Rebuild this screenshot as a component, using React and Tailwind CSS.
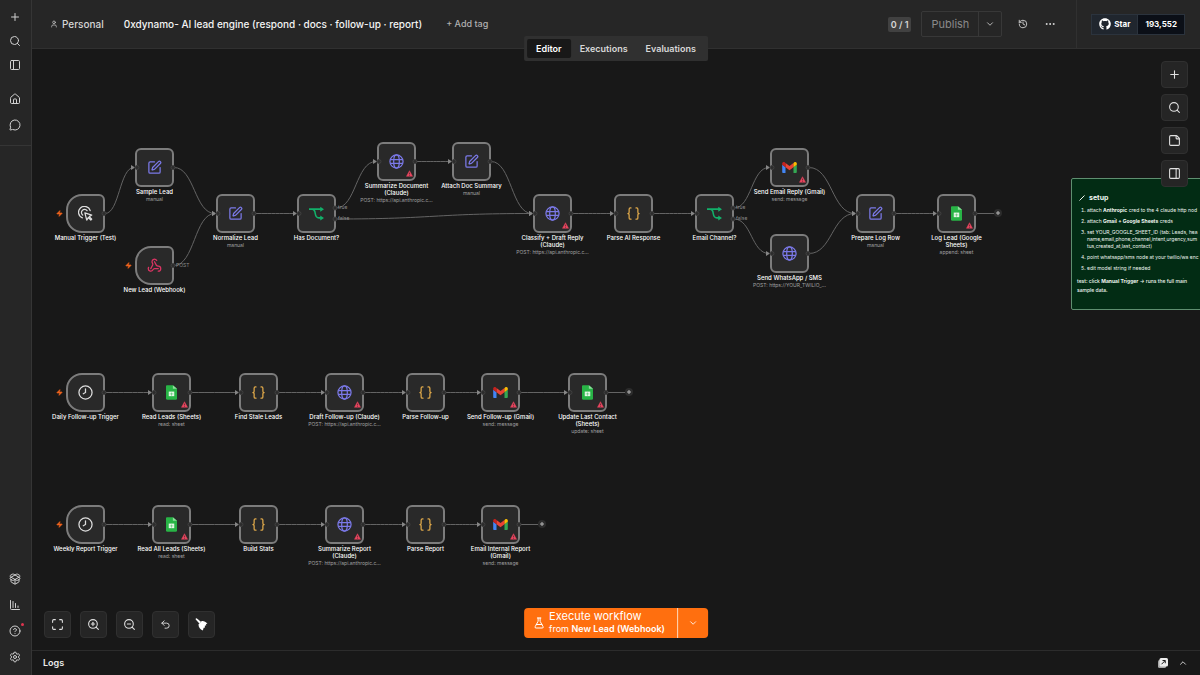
import {
  ChartColumnDecreasing,
  ChevronDown,
  ChevronUp,
  Braces,
  CircleQuestionMark,
  Ellipsis,
  FlaskConical,
  History,
  House,
  Maximize,
  MessageCircle,
  PackageOpen,
  PanelLeft,
  PanelRight,
  Plus,
  Search,
  Settings,
  SquarePen,
  StickyNote,
  Undo2,
  User,
  Webhook,
  Zap,
  ZoomIn,
  ZoomOut,
} from 'lucide-react'
import { FaGithub } from 'react-icons/fa'

const NODE_SIZE = 39

const NODES = [
  { id: 'manual', x: 34, y: 145, icon: 'click', label: ['Manual Trigger (Test)'], trigger: true },
  { id: 'sample', x: 103, y: 99, icon: 'edit', label: ['Sample Lead'], sub: 'manual' },
  { id: 'webhook', x: 103, y: 197, icon: 'webhook', label: ['New Lead (Webhook)'], trigger: true },
  { id: 'normalize', x: 184, y: 145, icon: 'edit', label: ['Normalize Lead'], sub: 'manual' },
  { id: 'hasDoc', x: 265, y: 145, icon: 'branch', label: ['Has Document?'] },
  { id: 'summarize', x: 345, y: 93, icon: 'globe', label: ['Summarize Document', '(Claude)'], sub: 'POST: https://api.anthropic.c...', warn: true },
  { id: 'attach', x: 420, y: 93, icon: 'edit', label: ['Attach Doc Summary'], sub: 'manual' },
  { id: 'classify', x: 501, y: 145, icon: 'globe', label: ['Classify + Draft Reply', '(Claude)'], sub: 'POST: https://api.anthropic.c...', warn: true },
  { id: 'parseAi', x: 582, y: 145, icon: 'code', label: ['Parse AI Response'] },
  { id: 'channel', x: 663, y: 145, icon: 'branch', label: ['Email Channel?'] },
  { id: 'email', x: 738, y: 99, icon: 'gmail', label: ['Send Email Reply (Gmail)'], sub: 'send: message', warn: true },
  { id: 'sms', x: 738, y: 185, icon: 'globe', label: ['Send WhatsApp / SMS'], sub: 'POST: https://YOUR_TWILIO_...' },
  { id: 'prepare', x: 824, y: 145, icon: 'edit', label: ['Prepare Log Row'], sub: 'manual' },
  { id: 'log', x: 905, y: 145, icon: 'sheets', label: ['Log Lead (Google', 'Sheets)'], sub: 'append: sheet', warn: true, end: true },

  { id: 'daily', x: 34, y: 324, icon: 'clock', label: ['Daily Follow-up Trigger'], trigger: true },
  { id: 'readLeads', x: 120, y: 324, icon: 'sheets', label: ['Read Leads (Sheets)'], sub: 'read: sheet', warn: true },
  { id: 'stale', x: 207, y: 324, icon: 'code', label: ['Find Stale Leads'] },
  { id: 'draft', x: 293, y: 324, icon: 'globe', label: ['Draft Follow-up (Claude)'], sub: 'POST: https://api.anthropic.c...', warn: true },
  { id: 'parseFollow', x: 374, y: 324, icon: 'code', label: ['Parse Follow-up'] },
  { id: 'sendFollow', x: 449, y: 324, icon: 'gmail', label: ['Send Follow-up (Gmail)'], sub: 'send: message', warn: true },
  { id: 'update', x: 536, y: 324, icon: 'sheets', label: ['Update Last Contact', '(Sheets)'], sub: 'update: sheet', warn: true, end: true },

  { id: 'weekly', x: 34, y: 456, icon: 'clock', label: ['Weekly Report Trigger'], trigger: true },
  { id: 'readAll', x: 120, y: 456, icon: 'sheets', label: ['Read All Leads (Sheets)'], sub: 'read: sheet', warn: true },
  { id: 'stats', x: 207, y: 456, icon: 'code', label: ['Build Stats'] },
  { id: 'sumReport', x: 293, y: 456, icon: 'globe', label: ['Summarize Report', '(Claude)'], sub: 'POST: https://api.anthropic.c...', warn: true },
  { id: 'parseReport', x: 374, y: 456, icon: 'code', label: ['Parse Report'] },
  { id: 'emailReport', x: 449, y: 456, icon: 'gmail', label: ['Email Internal Report', '(Gmail)'], sub: 'send: message', warn: true, end: true },
]

const EDGES = [
  ['manual', 'sample'],
  ['sample', 'normalize'],
  ['webhook', 'normalize'],
  ['normalize', 'hasDoc'],
  ['hasDoc', 'summarize', 14],
  ['hasDoc', 'classify', 25],
  ['summarize', 'attach'],
  ['attach', 'classify'],
  ['classify', 'parseAi'],
  ['parseAi', 'channel'],
  ['channel', 'email', 14],
  ['channel', 'sms', 25],
  ['email', 'prepare'],
  ['sms', 'prepare'],
  ['prepare', 'log'],
  ['daily', 'readLeads'],
  ['readLeads', 'stale'],
  ['stale', 'draft'],
  ['draft', 'parseFollow'],
  ['parseFollow', 'sendFollow'],
  ['sendFollow', 'update'],
  ['weekly', 'readAll'],
  ['readAll', 'stats'],
  ['stats', 'sumReport'],
  ['sumReport', 'parseReport'],
  ['parseReport', 'emailReport'],
]

const byId = Object.fromEntries(NODES.map((node) => [node.id, node]))

const ClickIcon = () => (
  <svg className="w-[15px] h-[15px] text-[#dedede]" viewBox="0 0 24 24" fill="none" stroke="currentColor" strokeWidth="2" strokeLinecap="round" strokeLinejoin="round">
    <path d="M7 19A9.500 9.500 0 1 1 19.500 7.500" />
    <path d="M7.500 14.500A5 5 0 1 1 14.500 7.500" />
    <path d="M11 11l11 3.500-4 2.500 4 4-1.500 1.500-4-4-2.500 4z" />
  </svg>
)

const GlobeIcon = () => (
  <svg className="w-[15px] h-[15px] text-[#7b79e8]" viewBox="0 0 24 24" fill="none" stroke="currentColor" strokeWidth="2">
    <circle cx="12" cy="12" r="10.500" />
    <ellipse cx="12" cy="12" rx="4.500" ry="10.500" />
    <path d="M2 9h20M2 15h20" />
  </svg>
)

const BranchIcon = () => (
  <svg className="w-[15px] h-[15px] text-[#12b06a]" viewBox="0 0 24 24" fill="none" stroke="currentColor" strokeWidth="2.500">
    <path d="M0 5h20M5 5c4 0 4.500 3 5 7s2 7 6 7h4" />
    <path d="M18 1l6 4-6 4zM18 15l6 4-6 4z" fill="currentColor" stroke="none" />
  </svg>
)

const ClockIcon = () => (
  <svg className="w-[15px] h-[15px] text-[#dedede]" viewBox="0 0 24 24" fill="none" stroke="currentColor" strokeWidth="2" strokeLinecap="round">
    <circle cx="12" cy="12" r="10.500" />
    <path d="M12 6v6l-3.500 2" />
  </svg>
)

const GmailIcon = () => (
  <svg className="w-[15px] h-[11px]" viewBox="0 0 256 193">
    <path fill="#4285f4" d="M58 192V93L27 65 0 50v125c0 10 8 17 17 17z" />
    <path fill="#34a853" d="M198 192h41c9 0 17-8 17-17V50l-31 18-27 25z" />
    <path fill="#ea4335" d="M58 93l-4-38 4-37 70 53 70-53 5 35-5 40-70 53z" />
    <path fill="#fbbc04" d="M198 18v75l58-43V26c0-21-25-34-42-21z" />
    <path fill="#c5221f" d="M0 50l27 20 31 23V18L42 5C25-8 0 5 0 26z" />
  </svg>
)

const SheetsIcon = () => (
  <svg className="w-[11px] h-[15px]" viewBox="0 0 24 32">
    <path fill="#28b446" d="M2 0h13l9 8v21a3 3 0 0 1-3 3H3a3 3 0 0 1-3-3V2a2 2 0 0 1 2-2z" />
    <path fill="#8ede9c" d="M15 0l9 8h-9z" />
    <rect x="6" y="14" width="12" height="10" fill="#e6f7e8" />
    <path d="M8 19h8M12 16v7" stroke="#28b446" strokeWidth="1" />
  </svg>
)

const BroomIcon = () => (
  <svg className="w-[13px] h-[13px] text-white" viewBox="0 0 24 24" fill="currentColor">
    <path d="M1.500 1l1.500-.500 8 6.500-3 3L1 2.500z" />
    <path d="M12.500 5.500c4-.500 7 1 10.500 5l-3 .500 1 2.500-3 1 .500 3-2.500.500-1.500 5C9.500 21 6 16.500 6.500 11.500z" />
  </svg>
)

const WarningIcon = () => (
  <svg className="absolute right-px bottom-0.5 w-[7px] h-[7px]" viewBox="0 0 16 16">
    <path fill="#e8455f" d="M8 1.500L15 14.500H1z" stroke="#e8455f" strokeLinejoin="round" />
    <path d="M8 6v4M8 11.500v1.500" stroke="#3a2228" strokeWidth="1.500" />
  </svg>
)

const NodeIcon = ({ name }) => {
  switch (name) {
    case 'click':
      return <ClickIcon />
    case 'edit':
      return <SquarePen className="w-[15px] h-[15px] text-[#7b79e8]" />
    case 'webhook':
      return <Webhook className="w-[15px] h-[15px] text-[#dc3464]" />
    case 'branch':
      return <BranchIcon />
    case 'globe':
      return <GlobeIcon />
    case 'code':
      return <Braces className="w-[15px] h-[15px] text-[#e0a94a]" />
    case 'gmail':
      return <GmailIcon />
    case 'sheets':
      return <SheetsIcon />
    default:
      return <ClockIcon />
  }
}

const WorkflowNode = ({ node }) => (
  <div
    className="absolute flex flex-col items-center w-[39px]"
    style={{ left: node.x, top: node.y }}
  >
    <div
      className={`relative flex items-center justify-center w-[39px] h-[39px] shrink-0 border-2 border-[#7c7c7c] bg-[#292929] ${
        node.trigger ? 'rounded-r-md rounded-l-2xl' : 'rounded-md'
      }`}
    >
      <NodeIcon name={node.icon} />
      {node.warn && <WarningIcon />}
      {node.trigger && <Zap className="absolute -left-[12px] w-[7px] h-[7px] fill-[#f0641e] text-[#f0641e]" />}
    </div>
    <div className="mt-px text-[6px] leading-[7px] font-medium text-white text-center whitespace-nowrap">
      {node.label.map((line) => (
        <p key={line}>{line}</p>
      ))}
    </div>
    {node.sub && <p className="text-[5px] leading-[8px] text-[#a0a0a0] whitespace-nowrap">{node.sub}</p>}
  </div>
)

const edgePath = ([from, to, offset]) => {
  const x1 = byId[from].x + NODE_SIZE
  const y1 = byId[from].y + (offset ?? NODE_SIZE / 2)
  const x2 = byId[to].x - 1
  const y2 = byId[to].y + NODE_SIZE / 2
  const mid = (x1 + x2) / 2
  return `M${x1} ${y1}C${mid} ${y1} ${mid} ${y2} ${x2} ${y2}`
}

const Edges = () => (
  <svg className="absolute inset-0 w-full h-full" fill="none">
    {EDGES.map((edge) => {
      const target = byId[edge[1]]
      return (
        <g key={edge.join('-')}>
          <path d={edgePath(edge)} stroke="#646464" />
          <path
            d={`M${target.x - 4} ${target.y + 17}l4 2.500-4 2.500z`}
            fill="#868686"
          />
        </g>
      )
    })}
    {NODES.filter((node) => node.end).map((node) => (
      <g key={node.id}>
        <path d={`M${node.x + NODE_SIZE} ${node.y + 19.5}h18`} stroke="#646464" />
        <circle cx={node.x + 61} cy={node.y + 19} r="4" fill="#2c2c2c" />
        <path d={`M${node.x + 59} ${node.y + 19}h4m-2-2v4`} stroke="#b5b5b5" />
      </g>
    ))}
  </svg>
)

// connection dots sit above the node borders
const Handles = () => (
  <svg className="absolute inset-0 w-full h-full pointer-events-none" fill="#2c2c2c" stroke="#404040">
    {NODES.map((node) => (
      <g key={node.id}>
        {!node.trigger && <circle cx={node.x + 2} cy={node.y + 19.5} r="2" />}
        {node.icon === 'branch' ? (
          <>
            <circle cx={node.x + 38} cy={node.y + 14} r="2" />
            <circle cx={node.x + 38} cy={node.y + 25} r="2" />
          </>
        ) : (
          <circle cx={node.x + 38} cy={node.y + 19.5} r="2" />
        )}
      </g>
    ))}
  </svg>
)

const OutputLabels = ({ node }) => (
  <div
    className="absolute flex flex-col gap-[6px] text-[5px] leading-[5px] text-[#8c8c8c]"
    style={{ left: node.x + 41, top: node.y + 11 }}
  >
    <span>true</span>
    <span>false</span>
  </div>
)

const StickyNoteCard = () => (
  <section className="absolute left-[1039px] top-[129px] w-[200px] h-[132px] px-[5px] pt-[14px] rounded-xs border border-[#5f8f70] bg-[#022c14] text-[#eef6f0] whitespace-nowrap">
    <h2 className="flex items-center gap-1 px-0.5 text-[7px] leading-[10px] font-bold">
      <svg className="w-[6px] h-[6px]" viewBox="0 0 12 12" stroke="currentColor" strokeWidth="2">
        <path d="M1 11L11 1" />
      </svg>
      setup
    </h2>
    <ol className="flex flex-col gap-[4px] mt-[4px] pl-[10px] text-[5px] leading-[7px] list-decimal">
      <li>attach <b>Anthropic</b> cred to the 4 claude http nod</li>
      <li>attach <b>Gmail + Google Sheets</b> creds</li>
      <li>
        set YOUR_GOOGLE_SHEET_ID (tab: Leads, hea
        <br />
        name,email,phone,channel,intent,urgency,sum
        <br />
        tus,created_at,last_contact)
      </li>
      <li>point whatsapp/sms node at your twilio/wa enc</li>
      <li>edit model string if needed</li>
    </ol>
    <p className="mt-[5px] text-[5px] leading-[9px] font-medium">
      test: click <b>Manual Trigger</b> → runs the full main
      <br />
      sample data.
    </p>
  </section>
)

const IconButton = ({ label, children }) => (
  <button
    type="button"
    aria-label={label}
    className="flex items-center justify-center w-[27px] h-[27px] rounded border border-[#303030] bg-[#252525] text-[#e0e0e0]"
  >
    {children}
  </button>
)

const SidebarButton = ({ label, children }) => (
  <button type="button" aria-label={label} className="relative flex items-center justify-center w-full h-3 text-[#d0d0d0]">
    {children}
  </button>
)

const Sidebar = () => (
  <nav className="flex flex-col justify-between w-8 shrink-0 border-r border-[#353535] bg-[#262626]">
    <div className="pt-[11px] pr-px pb-[14px] border-b border-[#353535]">
      <div className="flex flex-col gap-3">
        <SidebarButton label="Create"><Plus className="w-3 h-3" /></SidebarButton>
        <SidebarButton label="Search"><Search className="w-3 h-3" /></SidebarButton>
        <SidebarButton label="Toggle sidebar"><PanelLeft className="w-3 h-3" /></SidebarButton>
      </div>
      <div className="flex flex-col gap-[14px] mt-[22px]">
        <SidebarButton label="Home"><House className="w-3 h-3" /></SidebarButton>
        <SidebarButton label="Chat"><MessageCircle className="w-3 h-3" /></SidebarButton>
      </div>
    </div>
    <div className="flex flex-col gap-[14px] pr-px pb-3">
      <SidebarButton label="Templates"><PackageOpen className="w-3 h-3" /></SidebarButton>
      <SidebarButton label="Insights"><ChartColumnDecreasing className="w-3 h-3" /></SidebarButton>
      <SidebarButton label="Help">
        <CircleQuestionMark className="w-3 h-3" />
        <span className="absolute right-[6px] -top-[2px] w-[3px] h-[3px] rounded-full bg-[#e0344f]" />
      </SidebarButton>
      <SidebarButton label="Settings"><Settings className="w-3 h-3" /></SidebarButton>
    </div>
  </nav>
)

const Header = () => (
  <header className="flex items-center h-[49px] shrink-0 border-b border-[#303030] bg-[#262626] whitespace-nowrap">
    <a href="#personal" className="flex items-center gap-1 pl-[18px] text-[10px] font-medium text-[#d6d6d6]">
      <User className="w-2 h-2" />
      Personal
    </a>
    <h1 className="ml-5 text-[10px] font-medium text-[#f4f4f4]">
      0xdynamo- AI lead engine (respond · docs · follow-up · report)
    </h1>
    <button type="button" className="ml-6 text-[9px] font-medium text-[#b0b0b0]">+ Add tag</button>

    <div className="flex items-center ml-auto mr-5">
      <span className="px-[3px] rounded-xs bg-[#414141] text-[9px] leading-[15px] font-semibold text-[#d6d6d6]">0 / 1</span>
      <div className="flex items-center ml-[10px] h-[26px] rounded-xs border border-[#383838]">
        <button type="button" className="h-full px-[9px] border-r border-[#383838] text-[11px] font-normal text-[#8a8a8a]">Publish</button>
        <button type="button" aria-label="Publish options" className="flex items-center justify-center w-[22px] h-full text-[#d0d0d0]">
          <ChevronDown className="w-2.5 h-2.5" />
        </button>
      </div>
      <button type="button" aria-label="History" className="ml-4 text-[#e0e0e0]"><History className="w-2.5 h-2.5" /></button>
      <button type="button" aria-label="More" className="ml-4 text-[#e0e0e0]"><Ellipsis className="w-3 h-3" /></button>
    </div>

    <div className="flex items-center h-full pl-[14px] pr-[15px] border-l border-[#303030]">
      <a href="#star" className="flex h-[21px] border border-[#2b333d] text-[8px] leading-[19px] font-bold text-white">
        <span className="flex items-center gap-[3px] px-[7px] bg-[#20262e]">
          <FaGithub className="w-3 h-3" />
          Star
        </span>
        <span className="px-[7px] border-l border-[#2b333d] bg-[#0b0f17]">193,552</span>
      </a>
    </div>
  </header>
)

const ViewTabs = () => (
  <div className="absolute left-1/2 -top-[13px] z-10 flex p-[3px] -translate-x-1/2 rounded-xs bg-[#303030] text-[9px] leading-[19px] font-semibold text-[#d8d8d8]">
    <button type="button" className="px-[9px] rounded-xs bg-[#181818] text-white">Editor</button>
    <button type="button" className="px-[9px]">Executions</button>
    <button type="button" className="px-[9px]">Evaluations</button>
  </div>
)

const Canvas = () => (
  <main className="relative flex-1 min-h-0">
    <ViewTabs />
    <div className="absolute inset-0 overflow-hidden">
      <Edges />
      {NODES.map((node) => (
        <WorkflowNode key={node.id} node={node} />
      ))}
      <Handles />
      <OutputLabels node={byId.hasDoc} />
      <OutputLabels node={byId.channel} />
      <span className="absolute left-[144px] top-[214px] text-[5px] leading-[5px] text-[#8c8c8c]">POST</span>
      <StickyNoteCard />
    </div>

    <div className="absolute right-3 top-3 flex flex-col gap-[6px]">
      <IconButton label="Add node"><Plus className="w-[13px] h-[13px]" /></IconButton>
      <IconButton label="Search nodes"><Search className="w-[13px] h-[13px]" /></IconButton>
      <IconButton label="Add note"><StickyNote className="w-[13px] h-[13px]" /></IconButton>
      <IconButton label="Toggle panel"><PanelRight className="w-[13px] h-[13px]" /></IconButton>
    </div>

    <div className="absolute left-3 bottom-3 flex gap-[9px]">
      <IconButton label="Fit view"><Maximize className="w-[13px] h-[13px]" /></IconButton>
      <IconButton label="Zoom in"><ZoomIn className="w-[13px] h-[13px]" /></IconButton>
      <IconButton label="Zoom out"><ZoomOut className="w-[13px] h-[13px]" /></IconButton>
      <IconButton label="Undo"><Undo2 className="w-[11px] h-[11px]" /></IconButton>
      <IconButton label="Tidy up"><BroomIcon /></IconButton>
    </div>

    <div className="absolute left-1/2 bottom-3 flex h-[30px] -translate-x-1/2 rounded-sm bg-[#ff6f0f] text-white whitespace-nowrap">
      <button type="button" className="flex items-center gap-1 pl-[9px] pr-3 text-left">
        <FlaskConical className="w-3 h-3" />
        <span className="pb-0.5">
          <span className="block text-[11px] leading-[13px] font-normal">Execute workflow</span>
          <span className="block text-[9px] leading-[12px]">from <b className="font-semibold">New Lead (Webhook)</b></span>
        </span>
      </button>
      <button type="button" aria-label="Choose trigger" className="flex items-center justify-center w-[31px] border-l border-[#ffd9bd]">
        <ChevronDown className="w-2.5 h-2.5" />
      </button>
    </div>
  </main>
)

const LogsBar = () => (
  <footer className="flex items-center justify-between h-[25px] shrink-0 pl-[11px] pr-3 border-t border-[#2c2c2c] text-[#ececec]">
    <h2 className="text-[9px] font-semibold">Logs</h2>
    <div className="flex items-center gap-[10px]">
      <button type="button" aria-label="Pop out logs">
        <svg className="w-2.5 h-2.5" viewBox="0 0 20 20">
          <rect x="0" y="4" width="16" height="16" rx="3" fill="#a8a8a8" />
          <rect x="3" y="0" width="17" height="17" rx="3" fill="#ececec" />
          <path d="M7 12.500L14 5.500M9 5h5.500v5.500" fill="none" stroke="#1a1a1a" strokeWidth="2" />
        </svg>
      </button>
      <button type="button" aria-label="Expand logs"><ChevronUp className="w-2.5 h-2.5" /></button>
    </div>
  </footer>
)

const App = () => {
  return (
    <div className="flex h-screen overflow-hidden bg-[#181818] font-['Inter',sans-serif]">
      <Sidebar />
      <div className="flex flex-col flex-1 min-w-0">
        <Header />
        <Canvas />
        <LogsBar />
      </div>
    </div>
  )
}

export default App
